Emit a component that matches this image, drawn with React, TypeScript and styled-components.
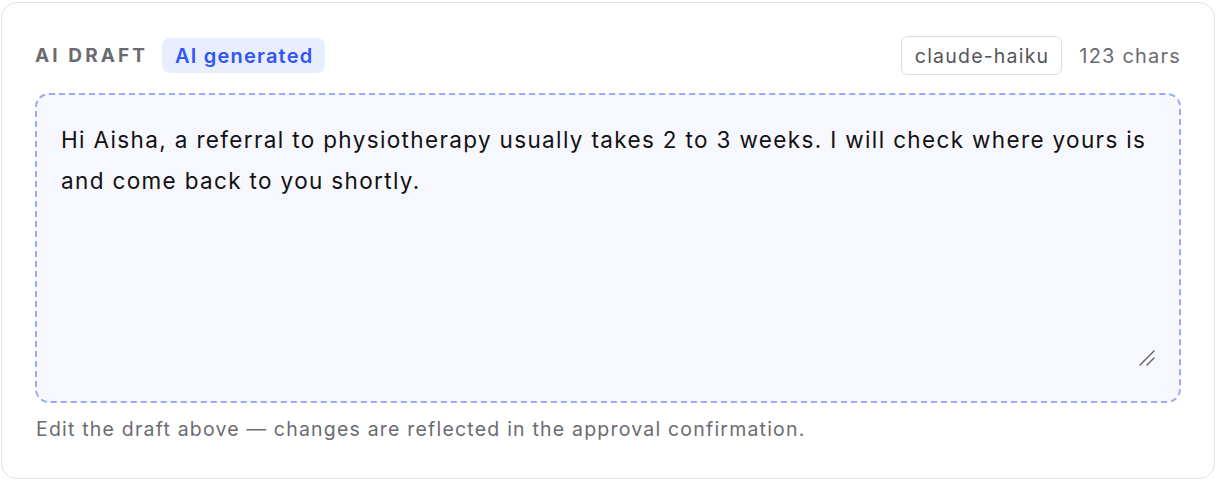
import styled, { createGlobalStyle } from "styled-components";

const GlobalStyle = createGlobalStyle`
  html, body {
    margin: 0;
    padding: 0;
    background: #ffffff;
  }
  body {
    font-family: Inter, "Noto Sans", "Liberation Sans", sans-serif;
    -webkit-font-smoothing: antialiased;
  }
`;

const Card = styled.section`
  box-sizing: border-box;
  width: 1214px;
  height: 477px;
  margin: 2px 0 0 1px;
  padding: 33px 33px 0 33px;
  border: 1.5px solid #e1e1e5;
  border-radius: 16px;
  background: #ffffff;
  display: flex;
  flex-direction: column;
`;

const Header = styled.div`
  display: flex;
  align-items: center;
  justify-content: space-between;
  height: 39px;
`;

const Group = styled.div<{ $gap: number }>`
  display: flex;
  align-items: center;
  gap: ${(p) => p.$gap}px;
`;

const Label = styled.span`
  font-size: 19px;
  font-weight: 700;
  letter-spacing: 3.1px;
  color: #6b6b71;
  text-transform: uppercase;
`;

const Badge = styled.span`
  display: inline-flex;
  align-items: center;
  height: 35px;
  padding: 0 12px 0 13px;
  border-radius: 8px;
  background: #e9eeff;
  color: #3056f5;
  font-size: 20px;
  font-weight: 600;
  letter-spacing: 1.2px;
`;

const ModelTag = styled.span`
  box-sizing: border-box;
  display: inline-flex;
  align-items: center;
  height: 39px;
  padding: 0 12px 0 13px;
  border: 1.5px solid #dcdce0;
  border-radius: 7px;
  color: #55555b;
  font-size: 19.5px;
  letter-spacing: 1.2px;
`;

const Count = styled.span`
  color: #6b6b71;
  font-size: 20px;
  letter-spacing: 1.2px;
`;

const DraftBox = styled.div`
  position: relative;
  box-sizing: border-box;
  margin-top: 18px;
  height: 310px;
  padding: 24px 24px 34px 24px;
  border: 2px dashed #97abf9;
  border-radius: 14px;
  background: #f7f8fd;
  display: flex;
`;

const DraftInput = styled.textarea`
  flex: 1;
  margin: 0;
  padding: 0;
  border: none;
  outline: none;
  background: transparent;
  resize: none;
  color: #111113;
  font-family: Inter, "Noto Sans", "Liberation Sans", sans-serif;
  font-size: 22.5px;
  line-height: 41px;
  letter-spacing: 1.35px;
`;

// stands in for the textarea's resize grip
const Grip = styled.svg`
  position: absolute;
  right: 24px;
  bottom: 35px;
  width: 16px;
  height: 16px;
  pointer-events: none;
`;

const Hint = styled.p`
  margin: 14px 0 0 1px;
  color: #6b6b71;
  font-size: 19.5px;
  letter-spacing: 1.2px;
`;

export default function App() {
  return (
    <>
      <GlobalStyle />
      <Card>
        <Header>
          <Group $gap={14}>
            <Label>AI Draft</Label>
            <Badge>AI generated</Badge>
          </Group>
          <Group $gap={17}>
            <ModelTag>claude-haiku</ModelTag>
            <Count>123 chars</Count>
          </Group>
        </Header>
        <DraftBox>
          <DraftInput
            defaultValue="Hi Aisha, a referral to physiotherapy usually takes 2 to 3 weeks. I will check where yours is and come back to you shortly."
          />
          <Grip viewBox="0 0 16 16">
            <path d="M1 15 L15 1 M8 15 L15 8" stroke="#5f5f64" strokeWidth="1.4" strokeLinecap="round" />
          </Grip>
        </DraftBox>
        <Hint>Edit the draft above — changes are reflected in the approval confirmation.</Hint>
      </Card>
    </>
  );
}
